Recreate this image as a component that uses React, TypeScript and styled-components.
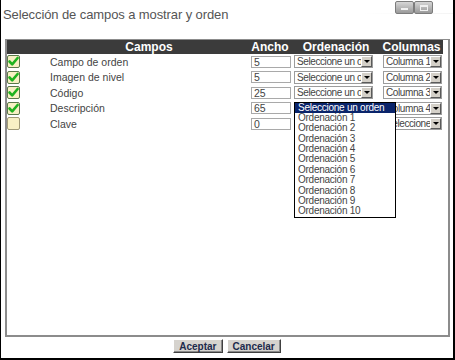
import React from 'react';
import styled, { createGlobalStyle } from 'styled-components';

const Global = createGlobalStyle`
  html, body { margin: 0; padding: 0; background: #fff; }
  body { font-family: "Liberation Sans", Arial, sans-serif; }
  * { box-sizing: border-box; }
`;

const Window = styled.div`
  width: 455px;
  height: 360px;
  border-left: 1px solid #000;
  border-right: 2px solid #000;
  border-bottom: 2px solid #000;
  display: flex;
  flex-direction: column;
  background: #fff;
`;

const TitleBar = styled.div`
  height: 39px;
  display: flex;
  justify-content: space-between;
  align-items: flex-start;
  padding: 0 20px 0 2px;
  background: linear-gradient(to right, #fff 0, #fff 80%, #f4f4f4 100%) no-repeat 0 13px / 100% 1px;
`;

const Title = styled.div`
  font-size: 13px;
  line-height: 15px;
  color: #555;
  padding-top: 7px;
  letter-spacing: -0.1px;
`;

const Controls = styled.div`
  display: flex;
  margin-top: 1px;
`;

const CtrlButton = styled.div`
  width: 19px;
  height: 13px;
  border: 1px solid #7c7c7c;
  border-radius: 2px;
  background: linear-gradient(#d6d6d6, #9a9a9a);
  display: flex;
  align-items: center;
  justify-content: center;
`;

const MinIcon = styled.span`
  width: 7px;
  height: 2px;
  background: #f0f0f0;
  margin-top: 2px;
`;

const MaxIcon = styled.span`
  width: 8px;
  height: 6px;
  border: 1px solid #f0f0f0;
  border-top-width: 2px;
`;

const Panel = styled.div`
  margin-left: 4px;
  width: 445px;
  height: 298px;
  border: 2px solid #8c8c8c;
  border-top-width: 1px;
  background: #fff;
`;

const cols = '43px 198px 44px 88px 63px';

const HeaderRow = styled.div`
  display: grid;
  grid-template-columns: ${cols};
  width: 436px;
  height: 14px;
  background: #3b3b3b;
`;

const HeaderCell = styled.div`
  color: #fff;
  font-weight: bold;
  font-size: 12px;
  line-height: 14px;
  text-align: center;
  white-space: nowrap;
`;

const Row = styled.div`
  display: grid;
  grid-template-columns: ${cols};
  width: 436px;
  height: 15.5px;
  align-items: center;
`;

const Cell = styled.div<{ $pad?: number }>`
  display: flex;
  align-items: center;
  padding-left: ${p => p.$pad ?? 0}px;
  position: relative;
  height: 100%;
`;

const Label = styled.span`
  font-size: 10.5px;
  color: #444;
  white-space: nowrap;
`;

const TextInput = styled.div`
  width: 40px;
  height: 12px;
  border: 1px solid #a9a9a9;
  font-size: 10.5px;
  line-height: 10px;
  color: #444;
  padding-left: 2px;
  background: #fff;
`;

const SelectBox = styled.div<{ $w: number }>`
  width: ${p => p.$w}px;
  height: 13px;
  border: 1px solid #9c9c9c;
  display: flex;
  align-items: center;
  background: #fff;
`;

const SelectText = styled.span`
  flex: 1;
  overflow: hidden;
  white-space: nowrap;
  font-size: 10px;
  letter-spacing: -0.4px;
  line-height: 11px;
  color: #444;
  padding-left: 2px;
`;

const Arrow = styled.span`
  width: 11px;
  height: 11px;
  flex: none;
  background: #d4d0c8;
  border: 1px solid;
  border-color: #fff #5a5a5a #5a5a5a #fff;
  display: flex;
  align-items: center;
  justify-content: center;
  &::after {
    content: '';
    border-top: 3px solid #000;
    border-left: 3px solid transparent;
    border-right: 3px solid transparent;
  }
`;

const DropList = styled.div`
  position: absolute;
  left: 2px;
  top: calc(100% + 1px);
  width: 102px;
  border: 1px solid #000;
  background: #fff;
  z-index: 10;
`;

const DropItem = styled.div<{ $active?: boolean }>`
  font-size: 10px;
  letter-spacing: -0.25px;
  line-height: 10.4px;
  height: 10.4px;
  padding-left: 3px;
  white-space: nowrap;
  color: ${p => (p.$active ? '#fff' : '#444')};
  background: ${p => (p.$active ? '#0a246a' : '#fff')};
`;

const Footer = styled.div`
  flex: 1;
  display: flex;
  justify-content: center;
  align-items: flex-start;
  gap: 4px;
  padding-top: 2px;
`;

const Button = styled.button`
  height: 14px;
  padding: 0 5px;
  font-family: "Liberation Sans", Arial, sans-serif;
  font-weight: bold;
  font-size: 10px;
  line-height: 11px;
  color: #1c2a4c;
  background: #d6d3ce;
  border: 1px solid;
  border-color: #fff #404040 #404040 #fff;
  box-shadow: inset -1px -1px 0 #8a8a8a;
  cursor: pointer;
`;

const Check = ({ checked }: { checked: boolean }) => (
  <svg width="13" height="13" viewBox="0 0 13 13">
    <rect x="0.5" y="0.5" width="12" height="12" rx="1.5" fill="#f8f0c4" stroke={checked ? '#5b7a4a' : '#a09a78'} />
    {checked && (
      <path d="M2.5 6.5 L5.2 9.3 L10.6 3" fill="none" stroke="#1fb21f" strokeWidth="2.6" strokeLinecap="round" strokeLinejoin="round" />
    )}
  </svg>
);

const Select = ({ text, w }: { text: string; w: number }) => (
  <SelectBox $w={w}>
    <SelectText>{text}</SelectText>
    <Arrow />
  </SelectBox>
);

const rows = [
  { label: 'Campo de orden', checked: true, ancho: '5', col: 'Columna 1' },
  { label: 'Imagen de nivel', checked: true, ancho: '5', col: 'Columna 2' },
  { label: 'Código', checked: true, ancho: '25', col: 'Columna 3', open: true },
  { label: 'Descripción', checked: true, ancho: '65', col: 'Columna 4' },
  { label: 'Clave', checked: false, ancho: '0', col: 'Seleccione' },
];

const options = Array.from({ length: 10 }, (_, i) => `Ordenación ${i + 1}`);

export default function App() {
  return (
    <>
      <Global />
      <Window>
        <TitleBar>
          <Title>Selección de campos a mostrar y orden</Title>
          <Controls>
            <CtrlButton><MinIcon /></CtrlButton>
            <CtrlButton><MaxIcon /></CtrlButton>
          </Controls>
        </TitleBar>
        <Panel>
          <HeaderRow>
            <HeaderCell />
            <HeaderCell>Campos</HeaderCell>
            <HeaderCell>Ancho</HeaderCell>
            <HeaderCell>Ordenación</HeaderCell>
            <HeaderCell>Columnas</HeaderCell>
          </HeaderRow>
          {rows.map(r => (
            <Row key={r.label}>
              <Cell><Check checked={r.checked} /></Cell>
              <Cell><Label>{r.label}</Label></Cell>
              <Cell $pad={3}><TextInput>{r.ancho}</TextInput></Cell>
              <Cell $pad={2}>
                <Select text="Seleccione un orden" w={79} />
                {r.open && (
                  <DropList>
                    <DropItem $active>Seleccione un orden</DropItem>
                    {options.map(o => (
                      <DropItem key={o}>{o}</DropItem>
                    ))}
                  </DropList>
                )}
              </Cell>
              <Cell $pad={3}><Select text={r.col} w={59} /></Cell>
            </Row>
          ))}
        </Panel>
        <Footer>
          <Button>Aceptar</Button>
          <Button>Cancelar</Button>
        </Footer>
      </Window>
    </>
  );
}
